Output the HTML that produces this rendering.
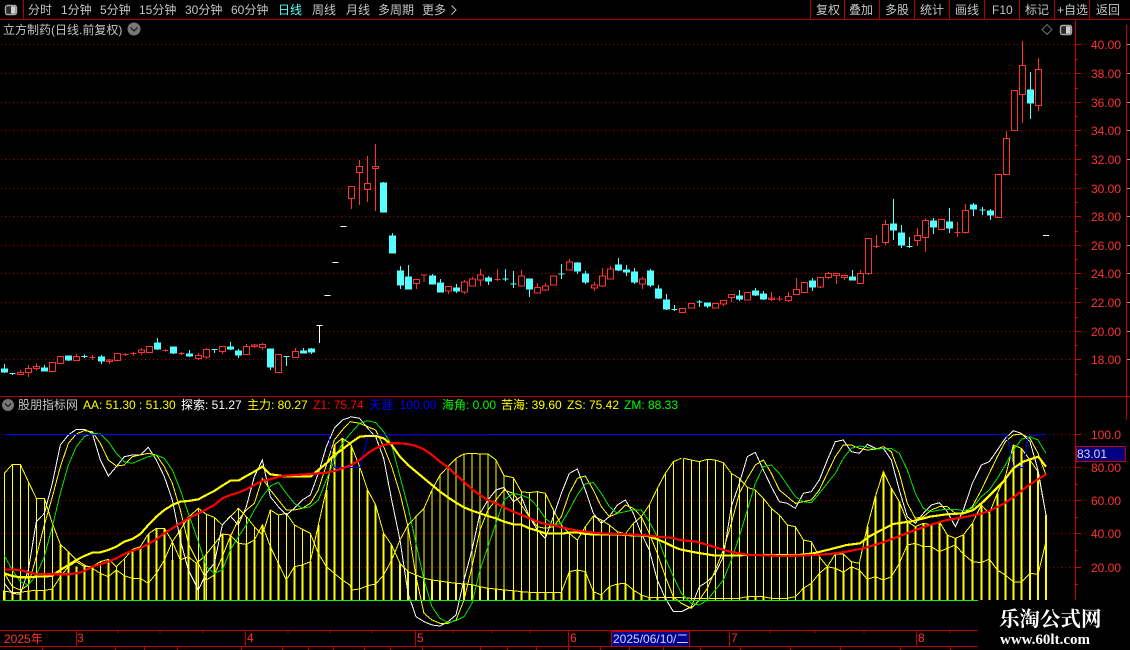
<!DOCTYPE html>
<html lang="zh">
<head>
<meta charset="utf-8">
<title>立方制药</title>
<style>
html,body{margin:0;padding:0;background:#000;width:1130px;height:650px;overflow:hidden}
svg{display:block;position:absolute;left:0;top:0}
text{font-family:"Liberation Sans","WenQuanYi Zen Hei","Noto Sans CJK SC",sans-serif;font-size:12px}
.t{fill:#c4c4c4}
.r{fill:#ff3232}
.y{fill:#ffff00}
.w{fill:#ffffff}
.g{fill:#00ff00}
.b{fill:#0000ff}
.red{fill:none;stroke:#ff3232;stroke-width:3;shape-rendering:crispEdges}
.cy{fill:#54ffff;stroke:#54ffff;stroke-width:3;shape-rendering:crispEdges}
.wh{fill:none;stroke:#fff;stroke-width:3;shape-rendering:crispEdges}
.l{fill:none;stroke-width:3;shape-rendering:crispEdges}
.tk{fill:none;stroke-width:6.5;stroke-linejoin:round;shape-rendering:crispEdges}
</style>
</head>
<body>
<svg width="1130" height="650" viewBox="0 0 1130 650" xmlns="http://www.w3.org/2000/svg">
<rect width="1130" height="650" fill="#000"/>

<!-- toolbar -->
<path d="M0 19.5H1130M23.5 0V19M810.5 0V19M844.5 0V19M879.5 0V19M914.5 0V19M949.5 0V19M984.5 0V19M1019.5 0V19M1054.5 0V19M1089.5 0V19" stroke="#b00000" fill="none" shape-rendering="crispEdges"/>
<rect x="5.5" y="5.5" width="11" height="9" rx="2" fill="#2a2a2a" stroke="#a8a8a8" stroke-width="1.4"/>
<rect x="11" y="6.5" width="4.5" height="7" fill="#cfcfcf"/>
<g class="t">
<text x="28" y="14">分时</text>
<text x="61" y="14">1分钟</text>
<text x="100" y="14">5分钟</text>
<text x="139" y="14">15分钟</text>
<text x="185" y="14">30分钟</text>
<text x="231" y="14">60分钟</text>
<text x="278" y="14" style="fill:#54ffff">日线</text>
<text x="312" y="14">周线</text>
<text x="346" y="14">月线</text>
<text x="378" y="14">多周期</text>
<text x="422" y="14">更多</text>
<text x="816" y="14">复权</text>
<text x="849" y="14">叠加</text>
<text x="885" y="14">多股</text>
<text x="920" y="14">统计</text>
<text x="955" y="14">画线</text>
<text x="992" y="14">F10</text>
<text x="1025" y="14">标记</text>
<text x="1057" y="14">+自选</text>
<text x="1096" y="14">返回</text>
<text x="3" y="34">立方制药(日线.前复权)</text>
</g>
<path d="M451.5 5.5L456 10L451.5 14.5" fill="none" stroke="#c4c4c4"/>
<circle cx="134" cy="29" r="6.5" fill="#777"/>
<path d="M130.5 27.5L134 31L137.5 27.5" fill="none" stroke="#222" stroke-width="1.3"/>
<path d="M1047 24.5L1052 29.5L1047 34.5L1042 29.5Z" fill="none" stroke="#6e6e6e"/>
<rect x="1060.5" y="25.5" width="11" height="9" rx="2" fill="#2a2a2a" stroke="#a8a8a8" stroke-width="1.4"/>
<rect x="1066" y="26.5" width="4.5" height="7" fill="#cfcfcf"/>

<!-- grids -->
<g stroke="#a00000" stroke-dasharray="1 3" fill="none">
<path d="M1 44.5H1075M1 73.5H1075M1 102.5H1075M1 130.5H1075M1 159.5H1075M1 188.5H1075M1 216.5H1075M1 245.5H1075M1 273.5H1075M1 302.5H1075M1 331.5H1075M1 359.5H1075"/>
<path d="M1 434.5H1075M1 467.5H1075M1 500.5H1075M1 533.5H1075M1 567.5H1075"/>
</g>

<!-- axes -->
<path d="M1075.5 19V600M1126.5 25V420M0 396.5H1130" stroke="#c00000" fill="none" shape-rendering="crispEdges"/>
<path d="M1075 44.5h6M1075 73.5h6M1075 102.5h6M1075 130.5h6M1075 159.5h6M1075 188.5h6M1075 216.5h6M1075 245.5h6M1075 273.5h6M1075 302.5h6M1075 331.5h6M1075 359.5h6M1075 59.5h3M1075 88.5h3M1075 116.5h3M1075 145.5h3M1075 174.5h3M1075 202.5h3M1075 231.5h3M1075 259.5h3M1075 288.5h3M1075 317.5h3M1075 345.5h3M1075 374.5h3M1075 434.5h6M1075 467.5h6M1075 500.5h6M1075 533.5h6M1075 567.5h6M1075 451.5h3M1075 484.5h3M1075 517.5h3M1075 550.5h3M1075 584.5h3" stroke="#d00000" fill="none" shape-rendering="crispEdges"/>
<path d="M1127 44.5h3M1127 73.5h3M1127 102.5h3M1127 130.5h3M1127 159.5h3M1127 188.5h3M1127 216.5h3M1127 245.5h3M1127 273.5h3M1127 302.5h3M1127 331.5h3M1127 359.5h3" stroke="#999" fill="none" shape-rendering="crispEdges"/>
<g class="r">
<text x="1091" y="49">40.00</text>
<text x="1091" y="78">38.00</text>
<text x="1091" y="107">36.00</text>
<text x="1091" y="135">34.00</text>
<text x="1091" y="164">32.00</text>
<text x="1091" y="193">30.00</text>
<text x="1091" y="221">28.00</text>
<text x="1091" y="250">26.00</text>
<text x="1091" y="278">24.00</text>
<text x="1091" y="307">22.00</text>
<text x="1091" y="336">20.00</text>
<text x="1091" y="364">18.00</text>
<text x="1091" y="439">100.0</text>
<text x="1091" y="472">80.00</text>
<text x="1091" y="505">60.00</text>
<text x="1091" y="538">40.00</text>
<text x="1091" y="572">20.00</text>
</g>

<!-- candles -->
<g transform="translate(0,130) scale(.33333)">
<path class="red" d="M52 727h18V734h-18zM61 720V727M76 715h18V728h-18zM85 705V715M85 728V741M100 709h18V716h-18zM109 700V709M109 716V722M148 697h18V725h-18zM172 679h18V701h-18zM220 679h18V692h-18zM229 672V679M268 682h18M277 675V690M319 690h18V694h-18zM328 687V702M343 670h18V692h-18zM367 673h18M376 669V678M391 671h18M400 666V678M415 660h18V668h-18zM424 654V660M424 668V675M439 649h18V668h-18zM487 661h18M496 657V664M535 670h18M544 666V675M586 676h18V686h-18zM595 669V676M595 686V690M610 658h18V681h-18zM619 654V658M619 681V687M658 649h18V665h-18zM667 665V672M730 649h18V674h-18zM739 642V649M754 645h18V650h-18zM763 642V654M778 643h18V653h-18zM787 639V643M787 653V660M826 673h18V728h-18zM877 664h18V683h-18zM886 654V664M1045 169h18V206h-18zM1054 206V237M1069 109h18V128h-18zM1078 90V109M1078 128V225M1093 160h18V179h-18zM1102 78V160M1102 179V216M1117 109h18V116h-18zM1126 42V109M1126 116V243M1240 448h18V461h-18zM1249 461V477"/>
<path class="cy" d="M4 717h18V726h-18zM13 702V717M13 726V729M28 730h18M37 730V735M124 714h18V723h-18zM133 705V714M196 678h18V690h-18zM205 690V693M244 679h18M253 674V684M295 681h18V693h-18zM304 675V681M304 693V702M463 639h18V657h-18zM472 624V639M472 657V660M511 651h18V669h-18zM520 669V672M559 672h18V678h-18zM568 660V672M568 678V681M634 658h18M643 658V669M682 651h18V657h-18zM691 636V651M691 657V660M706 663h18V675h-18zM715 657V663M715 675V684M802 657h18V711h-18zM811 711V720M850 680h18M859 680V708M901 663h18V669h-18zM910 654V663M925 657h18V666h-18zM934 654V657M934 666V672M1141 159h18V246h-18zM1150 156V159M1168 318h18V369h-18zM1177 309V318M1192 423h18V465h-18zM1201 408V423M1201 465V477M1216 441h18V477h-18zM1225 405V441"/>
<path class="wh" d="M949 586h18M958 586V639M973 496h18M997 397h18M1021 289h18"/>
</g>
<g transform="translate(420,210) scale(.33333)">
<path class="red" d="M3 195h18M12 195V216M76 229h18V243h-18zM85 243V252M124 216h18V246h-18zM133 210V216M133 246V252M148 207h18V228h-18zM157 201V207M172 195h18V210h-18zM181 177V195M181 210V228M223 209h18M232 177V213M295 198h18V228h-18zM304 180V198M343 232h18V249h-18zM352 219V232M367 228h18V240h-18zM376 219V228M376 240V243M391 198h18V225h-18zM439 156h18V180h-18zM448 147V156M514 225h18V234h-18zM523 216V225M523 234V243M538 198h18V228h-18zM547 174V198M547 228V231M562 177h18V207h-18zM571 168V177M658 207h18V222h-18zM667 201V207M667 222V237M778 295h18V308h-18zM805 280h18V294h-18zM877 280h18V294h-18zM901 271h18V282h-18zM910 282V288M925 253h18V263h-18zM934 263V276M973 247h18V270h-18z"/>
<path class="cy" d="M28 198h18V222h-18zM37 192V198M52 219h18V246h-18zM61 207V219M100 234h18V243h-18zM109 222V234M109 243V249M196 204h18V213h-18zM205 198V204M205 213V225M247 207h18M256 177V213M271 222h18M280 183V234M319 207h18V237h-18zM328 237V261M415 192h18M424 162V207M463 159h18V183h-18zM472 156V159M472 183V192M487 192h18V216h-18zM496 183V192M496 216V222M586 165h18V180h-18zM595 144V165M595 180V183M610 180h18V186h-18zM619 165V198M634 186h18V216h-18zM643 174V186M643 216V222M682 183h18V225h-18zM691 177V183M691 225V231M706 237h18V264h-18zM715 225V237M715 264V267M730 270h18V297h-18zM739 252V270M739 297V300M754 298h18M763 285V303M829 276h18M838 270V291M853 279h18V288h-18zM862 288V294M949 258h18V267h-18zM958 240V258M958 267V273M997 243h18V255h-18zM1006 234V243M1006 255V258"/>
</g>
<g transform="translate(760,30) scale(.33333)">
<path class="red" d="M25 804h18V808h-18zM34 786V813M49 807h18M58 798V813M76 799h18V812h-18zM85 786V799M85 812V816M100 778h18V794h-18zM109 744V778M124 757h18V788h-18zM172 742h18V771h-18zM181 771V774M196 730h18V743h-18zM205 726V730M205 743V747M220 730h18V736h-18zM229 736V762M244 736h18V743h-18zM253 733V736M253 743V750M292 730h18V761h-18zM301 720V730M316 625h18V731h-18zM325 731V735M340 650h18M349 615V654M367 583h18V638h-18zM376 570V583M376 638V645M463 616h18V632h-18zM472 594V616M472 632V648M487 571h18V623h-18zM496 565V571M496 623V666M535 568h18V599h-18zM583 607h18M592 576V621M607 541h18V608h-18zM616 522V541M616 608V611M706 433h18V563h-18zM730 325h18V434h-18zM739 303V325M754 181h18V302h-18zM778 106h18V194h-18zM787 33V106M787 194V279M826 118h18V227h-18zM835 84V118M835 227V243"/>
<path class="cy" d="M1 792h18V807h-18zM10 783V792M10 807V810M148 753h18V771h-18zM157 744V753M157 771V783M268 741h18V750h-18zM277 720V741M391 582h18V600h-18zM400 507V582M400 600V630M415 609h18V645h-18zM424 585V609M424 645V654M439 650h18M448 621V654M511 573h18V591h-18zM520 564V573M520 591V612M559 576h18V594h-18zM568 534V576M568 594V609M631 525h18V537h-18zM640 519V525M640 537V558M658 540h18M667 531V555M682 543h18V555h-18zM691 537V543M691 555V570M802 180h18V219h-18zM811 126V180M811 219V267"/>
<path class="wh" d="M849 616h18"/>
</g>

<!-- indicator legend -->
<circle cx="8" cy="405" r="6" fill="#777"/>
<path d="M5 403.5L8 406.5L11 403.5" fill="none" stroke="#222" stroke-width="1.3"/>
<text x="18" y="409" class="t">股朋指标网</text>
<text x="83" y="409" class="y">AA: 51.30</text>
<text x="139" y="409" class="y">: 51.30</text>
<text x="181" y="409" class="w">探索: 51.27</text>
<text x="247" y="409" class="y">主力: 80.27</text>
<text x="313" y="409" class="r" style="fill:#ff0000">Z1: 75.74</text>
<text x="369" y="409" class="b">天涯: 100.00</text>
<text x="442" y="409" class="g">海角: 0.00</text>
<text x="501" y="409" class="y">苦海: 39.60</text>
<text x="567" y="409" class="y">ZS: 75.42</text>
<text x="624" y="409" class="g">ZM: 88.33</text>

<!-- indicator part 1 -->
<g transform="translate(0,410) scale(.33333)">
<path class="l" stroke="#ffff00" d="M13 570V190M37 570V163M61 570V163M85 570V215M109 570V265M133 570V265M157 570V340M301 570V455M349 570V470M373 570V447M517 570V395M595 570V295M619 570V313M643 570V322M715 570V295M739 570V320M763 570V350M811 570V300M835 570V315M859 570V310M883 570V345M907 570V358M931 570V370"/>
<path d="M13 570V543M37 570V547M61 570V547M85 570V543M109 570V541M133 570V541M157 570V537M181 570V403M205 570V425M229 570V470M253 570V465M277 570V470M301 570V490M325 570V450M349 570V480M373 570V497M397 570V418M421 570V410M445 570V372M469 570V355M493 570V355M517 570V450M541 570V360M565 570V320M589 570V460M613 570V440M643 570V410M667 570V372M691 570V375M715 570V400M739 570V403M763 570V390M787 570V345M811 570V410M835 570V460M859 570V510M883 570V470M907 570V465M931 570V455M955 570V345M979 570V240M1003 570V105M1027 570V85" fill="none" stroke="#ffff00" stroke-width="6" shape-rendering="crispEdges"/>
<polyline class="l" stroke="#ffff00" points="10,570 10,543 37,547 61,547 85,543 109,541 133,541 157,537 181,500 205,470 229,455 253,470 277,470 301,455 325,448 349,470 373,447 397,418 421,410 445,372 469,355 493,355 517,395 541,450 565,440 589,460 613,440 637,410 667,372 691,375 715,400 739,403 763,390 787,345 811,410 835,460 859,510 883,470 907,465 931,455 955,345 979,240 1003,105 1027,85 1050,100"/>
<polyline class="l" stroke="#ffff00" points="13,570 13,190 37,163 61,163 85,215 109,265 133,265 157,340 181,403 205,425 229,450 253,465 277,475 301,490 325,500 349,480 373,497 397,505 421,505 445,520 469,490 493,450 517,395 541,360 565,322 595,295 619,313 643,322 667,345 691,320 715,295 739,320 763,350 787,375 811,300 835,315 859,310 883,345 907,358 931,370 955,430 979,470 1003,490 1027,510 1050,525"/>
<polyline class="l" stroke="#fff" points="13,520 37,550 61,553 85,480 109,335 133,310 157,220 181,105 205,75 229,58 253,58 277,70 301,150 325,198 349,170 373,140 397,135 421,135 445,112 469,150 493,200 517,270 541,390 565,480 595,540 619,490 643,460 667,345 691,318 715,345 739,290 763,200 787,150 811,260 835,290 859,315 883,295 907,270 931,255 955,190 979,110 1003,55 1027,30 1050,22"/>
<polyline class="l" stroke="#ffff00" points="13,490 37,530 61,540 85,525 109,440 133,345 157,260 181,170 205,100 229,72 253,62 277,65 301,100 325,150 349,168 373,165 397,140 421,135 445,130 469,135 493,170 517,220 541,300 565,400 595,460 619,510 643,495 667,440 691,380 715,330 739,300 763,280 787,205 811,240 835,270 859,300 883,300 907,295 931,280 955,240 979,165 1003,90 1027,60 1050,35"/>
<polyline class="l" stroke="#00e600" points="13,437 37,480 61,515 85,525 109,495 133,440 157,350 181,250 205,165 229,110 253,80 277,70 301,72 325,95 349,130 373,155 397,160 421,150 445,140 469,135 493,145 517,180 541,240 565,310 595,395 619,470 643,490 667,480 691,420 715,380 739,345 763,300 787,260 811,228 835,217 859,250 883,280 907,295 931,290 955,270 979,210 1003,150 1027,100 1050,72"/>
<polyline class="l" stroke="#0000ff" points="13,73 985,73 1003,172 1050,172" />
<polyline class="tk" stroke="#ffff00" points="13,490 37,498 61,502 85,502 109,500 133,500 157,497 181,480 205,465 229,450 253,438 277,428 301,427 325,420 349,410 373,395 397,387 421,372 445,345 469,320 493,300 517,285 541,275 565,273 595,268 619,255 643,243 667,227 691,212 715,212 739,198 763,185 787,170 811,193 835,196 859,200 883,200 907,200 931,200 955,180 979,160 1003,135 1027,118 1050,100"/>
<polyline class="tk" stroke="#ff0000" points="13,478 61,480 85,487 109,492 157,493 205,493 229,490 253,483 277,470 301,463 325,455 349,445 373,432 397,422 421,415 445,402 469,388 493,370 517,355 541,340 565,325 595,310 619,298 643,285 667,265 691,255 715,248 739,238 763,225 787,212 811,208 835,200 859,197 883,195 907,194 931,192 955,190 979,188 1003,183 1027,175 1050,167"/>
</g>

<!-- indicator part 2 -->
<g transform="translate(350,410) scale(.33333)">
<path class="l" stroke="#ffff00" d="M29 570V170M174 570V345M198 570V320M222 570V295M246 570V240M270 570V195M294 570V170M318 570V145M342 570V132M366 570V130M390 570V132M414 570V132M438 570V150M462 570V197M490 570V203M514 570V245M538 570V248M562 570V245M586 570V250M610 570V300M634 570V345M658 570V370M682 570V390M706 570V350M730 570V318M754 570V330M778 570V345M802 570V365M826 570V372M850 570V340M874 570V320M898 570V285M922 570V235M946 570V190M970 570V155"/>
<path d="M5 570V110M53 570V240M77 570V285M101 570V370M125 570V405M150 570V460M174 570V485M198 570V495M222 570V505M246 570V510M270 570V513M294 570V517M318 570V520M342 570V522M366 570V524M390 570V530M414 570V535M438 570V537M462 570V540M490 570V542M514 570V545M538 570V547M562 570V547M586 570V547M610 570V547M634 570V547M658 570V485M682 570V480M706 570V485M730 570V545M754 570V555M778 570V530M802 570V522M826 570V520M850 570V540M874 570V555M898 570V563M922 570V563M946 570V563M970 570V563" fill="none" stroke="#ffff00" stroke-width="6" shape-rendering="crispEdges"/>
<polyline class="l" stroke="#ffff00" points="0,100 5,110 29,170 53,240 77,285 101,370 125,405 150,460 174,485 198,495 222,505 246,510 270,513 294,517 318,520 342,522 366,524 390,530 414,535 438,537 462,540 490,542 514,545 538,547 562,547 586,547 610,547 634,547 658,485 682,480 706,485 730,545 754,555 778,530 802,522 826,520 850,540 874,555 898,563 922,563 946,563 970,563 994,563"/>
<polyline class="l" stroke="#ffff00" points="0,525 5,540 29,537 53,527 77,522 101,495 125,450 150,390 174,345 198,320 222,295 246,240 270,195 294,170 318,145 342,132 366,130 390,132 414,132 438,150 462,197 490,203 514,245 538,248 562,245 586,250 610,300 634,345 658,370 682,390 706,350 730,318 754,330 778,345 802,365 826,372 850,340 874,320 898,285 922,235 946,190 970,155 994,145"/>
<polyline class="l" stroke="#fff" points="0,20 29,25 53,55 77,80 101,145 125,270 150,390 174,550 198,620 222,635 246,645 270,648 294,635 318,615 342,510 366,420 390,310 414,270 438,240 462,232 490,275 514,260 538,320 562,360 586,385 610,320 634,250 658,190 682,177 706,240 730,310 754,340 778,320 802,285 826,270 850,310 874,370 898,420 922,510 946,565 970,605 994,605"/>
<polyline class="l" stroke="#ffff00" points="0,35 29,40 53,50 77,60 101,110 125,170 150,250 174,350 198,500 222,610 246,630 270,640 294,640 318,630 342,570 366,470 390,360 414,300 438,270 462,240 490,250 514,285 538,320 562,350 586,355 610,350 634,320 658,250 682,205 706,198 730,240 754,290 778,320 802,310 826,285 850,295 874,320 898,370 922,430 946,500 970,560 994,580"/>
<polyline class="l" stroke="#00e600" points="0,72 29,40 53,32 77,38 101,65 125,105 150,200 174,290 198,400 222,510 246,590 270,625 294,638 318,632 342,620 366,580 390,480 414,410 438,340 462,270 490,250 514,255 538,265 562,290 586,325 610,345 634,340 658,300 682,255 706,222 730,217 754,250 778,290 802,310 826,305 850,300 874,300 898,335 922,380 946,445 970,500 994,550"/>
<polyline class="l" stroke="#0000ff" points="0,172 30,172 55,75 1050,73"/>
<polyline class="tk" stroke="#ffff00" points="0,100 29,80 53,78 77,78 101,85 125,105 150,140 174,165 198,185 222,205 246,225 270,245 294,262 318,278 342,292 366,302 390,310 414,318 438,325 462,335 490,343 514,344 538,355 562,362 586,370 610,371 634,371 658,368 682,367 706,372 730,373 754,373 778,373 802,373 826,375 850,376 874,376 898,379 922,388 946,398 970,410 990,418"/>
<polyline class="tk" stroke="#ff0000" points="0,167 29,150 53,130 77,115 101,105 125,100 150,100 174,102 198,108 222,118 246,135 270,155 294,172 318,195 342,215 366,238 390,255 414,270 438,280 462,292 490,305 514,315 538,325 562,335 586,342 610,345 634,352 658,357 682,362 706,365 730,368 754,370 778,371 802,372 826,373 850,374 874,375 898,377 922,380 946,382 970,384 990,390"/>
</g>

<!-- indicator part 3 -->
<g transform="translate(680,410) scale(.33333)">
<path class="l" stroke="#ffff00" d="M10 570V145M34 570V150M58 570V155M82 570V148M106 570V150M130 570V158M154 570V190M178 570V205M202 570V232M226 570V240M250 570V265M274 570V295M298 570V315M322 570V345M346 570V350M370 570V390M394 570V395M418 570V440M442 570V470M466 570V432M490 570V432M514 570V455M538 570V460"/>
<path d="M202 570V560M226 570V560M250 570V560M370 570V535M394 570V520M418 570V490M442 570V470M466 570V475M490 570V487M514 570V470M538 570V480M562 570V350M586 570V260M610 570V185M634 570V235M658 570V275M682 570V335M706 570V350M730 570V340M754 570V345M778 570V335M802 570V375M826 570V385M850 570V375M877 570V340M904 570V285M928 570V310M952 570V250M976 570V200M1000 570V105M1024 570V115M1050 570V150M1074 570V185M1098 570V315" fill="none" stroke="#ffff00" stroke-width="6" shape-rendering="crispEdges"/>
<polyline class="l" stroke="#ffff00" points="10,145 34,150 58,155 82,148 106,150 130,158 154,190 178,205 202,232 226,240 250,265 274,295 298,315 322,345 346,350 370,390 394,395 418,440 442,470 466,432 490,432 514,455 538,460 562,350 586,260 610,185 634,235 658,275 682,335 706,350 730,340 754,345 778,335 802,375 826,385 850,375 877,340 904,285 928,310 952,250 976,200 1000,105 1024,115 1050,150 1074,185 1098,315"/>
<polyline class="l" stroke="#ffff00" points="4,563 34,565 58,565 82,565 106,565 130,565 154,565 178,565 202,560 226,560 250,560 274,565 298,565 322,565 346,560 370,535 394,520 418,490 442,470 466,475 490,487 514,470 538,480 562,508 586,500 610,510 634,500 658,460 682,405 706,400 730,410 754,410 778,425 802,415 826,405 850,432 877,455 904,458 928,447 952,480 976,495 1000,515 1024,517 1050,490 1074,493 1098,395"/>
<polyline class="l" stroke="#fff" points="4,605 34,590 58,530 82,515 106,490 130,440 154,290 178,220 202,140 226,127 250,180 274,230 298,275 322,280 346,295 370,250 394,245 418,210 442,150 466,95 490,90 514,125 538,130 562,103 586,115 610,115 634,150 658,240 682,320 706,340 730,310 754,285 778,278 802,305 826,350 850,300 877,220 904,165 928,155 952,120 976,85 1000,62 1024,70 1050,95 1074,180 1098,315"/>
<polyline class="l" stroke="#ffff00" points="4,580 34,595 58,570 82,535 106,480 130,420 154,340 178,250 202,205 226,165 250,150 274,190 298,240 322,260 346,280 370,275 394,270 418,240 442,190 466,140 490,105 514,105 538,115 562,120 586,118 610,110 634,125 658,190 682,280 706,325 730,320 754,300 778,290 802,290 826,310 850,310 877,290 904,240 928,190 952,140 976,95 1000,75 1024,72 1050,85 1074,130 1098,195"/>
<polyline class="l" stroke="#00e600" points="4,550 34,580 58,585 82,570 106,540 130,510 154,450 178,380 202,300 226,220 250,170 274,165 298,190 322,225 346,260 370,275 394,278 418,250 442,220 466,190 490,145 514,115 538,108 562,112 586,118 610,115 634,115 658,130 682,180 706,250 730,295 754,305 778,300 802,298 826,298 850,302 877,295 904,260 928,240 952,205 976,165 1000,120 1024,88 1050,80 1074,90 1098,130"/>
<polyline class="l" stroke="#0000ff" points="0,73 980,73 1000,172 1030,172 1045,78 1097,73"/>
<polyline class="tk" stroke="#ffff00" points="0,418 50,428 100,436 150,437 200,435 250,435 300,436 350,436 400,430 450,418 500,405 540,400 570,378 600,362 640,342 700,333 750,320 800,313 850,310 880,300 910,275 940,245 970,215 1000,175 1030,155 1075,140 1098,170"/>
<polyline class="tk" stroke="#ff0000" points="0,390 50,395 100,410 150,425 200,434 250,436 300,438 350,437 400,435 450,432 500,425 550,415 600,400 650,382 700,362 750,345 800,330 850,322 900,312 930,302 970,282 1010,255 1040,230 1070,210 1100,192"/>
</g>

<!-- green baseline -->
<path d="M3 600.5H978" stroke="#00ff00" fill="none" shape-rendering="crispEdges"/>

<!-- value tag -->
<rect x="1076.5" y="446.5" width="49" height="15" fill="#000080" stroke="#c00000" shape-rendering="crispEdges"/>
<text x="1077" y="458" style="fill:#d4d4ff">83.01</text>

<!-- time axis -->
<path d="M0 630.5H978M0 646.5H978M76.5 630V646M245.5 630V646M415.5 630V646M568.5 630V646M729.5 630V646M916.5 630V646M118 630v3M160 630v3M203 630v3M288 630v3M330 630v3M372 630v3M453 630v3M492 630v3M530 630v3M770 630v3M815 630v3M864 630v3M950 630v3M42.5 646v4M115.5 646v4M144.5 646v4M177.5 646v4M241.5 646v4M282.5 646v4M308.5 646v4M333.5 646v4M364.5 646v4M390.5 646v4M422.5 646v4M480.5 646v4M507.5 646v4M536.5 646v4M568.5 646v4M600.5 646v4M629.5 646v4M663.5 646v4M700.5 646v4M740.5 646v4M790.5 646v4M840.5 646v4M900.5 646v4M950.5 646v4" stroke="#c00000" fill="none" shape-rendering="crispEdges"/>
<text x="4" y="643" class="r">2025年</text>
<text x="77" y="642" class="r">3</text>
<text x="247" y="642" class="r">4</text>
<text x="417" y="642" class="r">5</text>
<text x="570" y="642" class="r">6</text>
<text x="731" y="642" class="r">7</text>
<text x="918" y="642" class="r">8</text>
<rect x="611.5" y="631.5" width="78" height="15" fill="#000090" stroke="#c00000" shape-rendering="crispEdges"/>
<text x="613" y="643" style="fill:#d4d4ff">2025/06/10/二</text>

<!-- watermark -->
<text x="999" y="626" style="font-family:'Liberation Serif','Noto Serif CJK SC',serif;font-size:20.5px;font-weight:bold;fill:#fff">乐淘公式网</text>
<text x="1000" y="644" style="font-family:'Liberation Serif',serif;font-size:15px;font-weight:bold;fill:#fff">www.60lt.com</text>
</svg>
</body>
</html>
